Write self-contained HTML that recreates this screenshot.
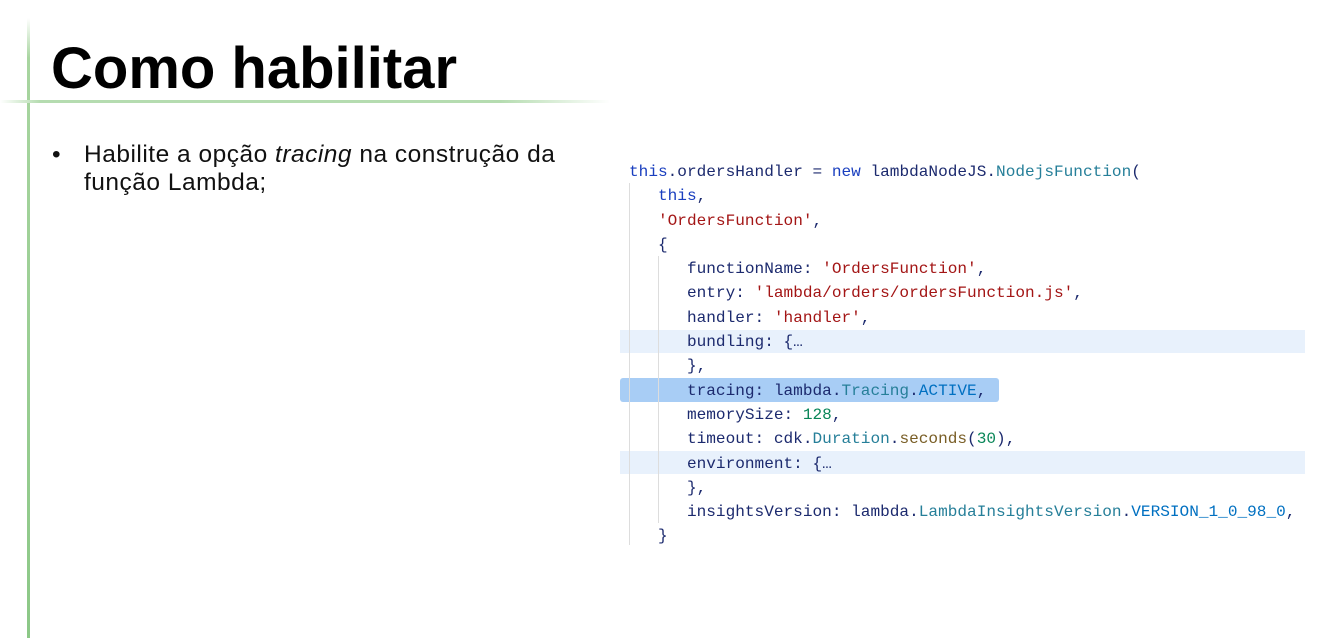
<!DOCTYPE html>
<html><head><meta charset="utf-8"><style>
body{margin:0;width:1321px;height:634px;background:#fff;position:relative;overflow:hidden;font-family:"Liberation Sans",sans-serif}
.vl{position:absolute;left:27px;top:18px;width:3px;height:620px;background:linear-gradient(#fff,#a8d5a0 40px,#8cc887)}
.hl{position:absolute;left:0;top:100px;width:610px;height:3px;background:linear-gradient(90deg,#fff,#b5dcb0 40px,#b5dcb0 500px,#fff)}
h1{position:absolute;left:51px;top:35px;margin:0;font-size:58px;font-weight:bold;letter-spacing:0px;color:#000;line-height:68px}
.b{position:absolute;left:52px;top:141px;font-size:24.5px;letter-spacing:0.5px;line-height:28px;color:#111}
.b span.t{position:absolute;left:32px;width:520px;top:0}
pre{position:absolute;left:629px;top:160px;margin:0;font-family:"Liberation Mono",monospace;font-size:16.1px;line-height:24.3px;color:#1c2a6e;z-index:2}
pre span{line-height:0}
.k{color:#1a3fbf}.s{color:#a31515}.c{color:#267f99}.n{color:#098658}.f{color:#795e26}.p{color:#0070c1}
.hlb{position:absolute;left:620px;width:685px;height:23px;background:#e8f1fc}
.act{position:absolute;left:620px;top:378px;width:379px;height:24px;background:#a8cdf5;border-radius:3px}
.g{position:absolute;width:1px;background:#ddd}
</style></head><body>
<div class="vl"></div><div class="hl"></div>
<h1>Como habilitar</h1>
<div class="b">•<span class="t">Habilite a opção <i>tracing</i> na construção da função Lambda;</span></div>
<div class="hlb" style="top:330px"></div>
<div class="hlb" style="top:451px"></div>
<div class="act"></div>
<div class="g" style="left:629px;top:183px;height:362px"></div>
<div class="g" style="left:658px;top:256px;height:267px"></div>
<pre><span class="k">this</span>.ordersHandler = <span class="k">new</span> lambdaNodeJS.<span class="c">NodejsFunction</span>(
   <span class="k">this</span>,
   <span class="s">'OrdersFunction'</span>,
   {
      functionName: <span class="s">'OrdersFunction'</span>,
      entry: <span class="s">'lambda/orders/ordersFunction.js'</span>,
      handler: <span class="s">'handler'</span>,
      bundling: {…
      },
      tracing: lambda.<span class="c">Tracing</span>.<span class="p">ACTIVE</span>,
      memorySize: <span class="n">128</span>,
      timeout: cdk.<span class="c">Duration</span>.<span class="f">seconds</span>(<span class="n">30</span>),
      environment: {…
      },
      insightsVersion: lambda.<span class="c">LambdaInsightsVersion</span>.<span class="p">VERSION_1_0_98_0</span>,
   }</pre>
</body></html>
